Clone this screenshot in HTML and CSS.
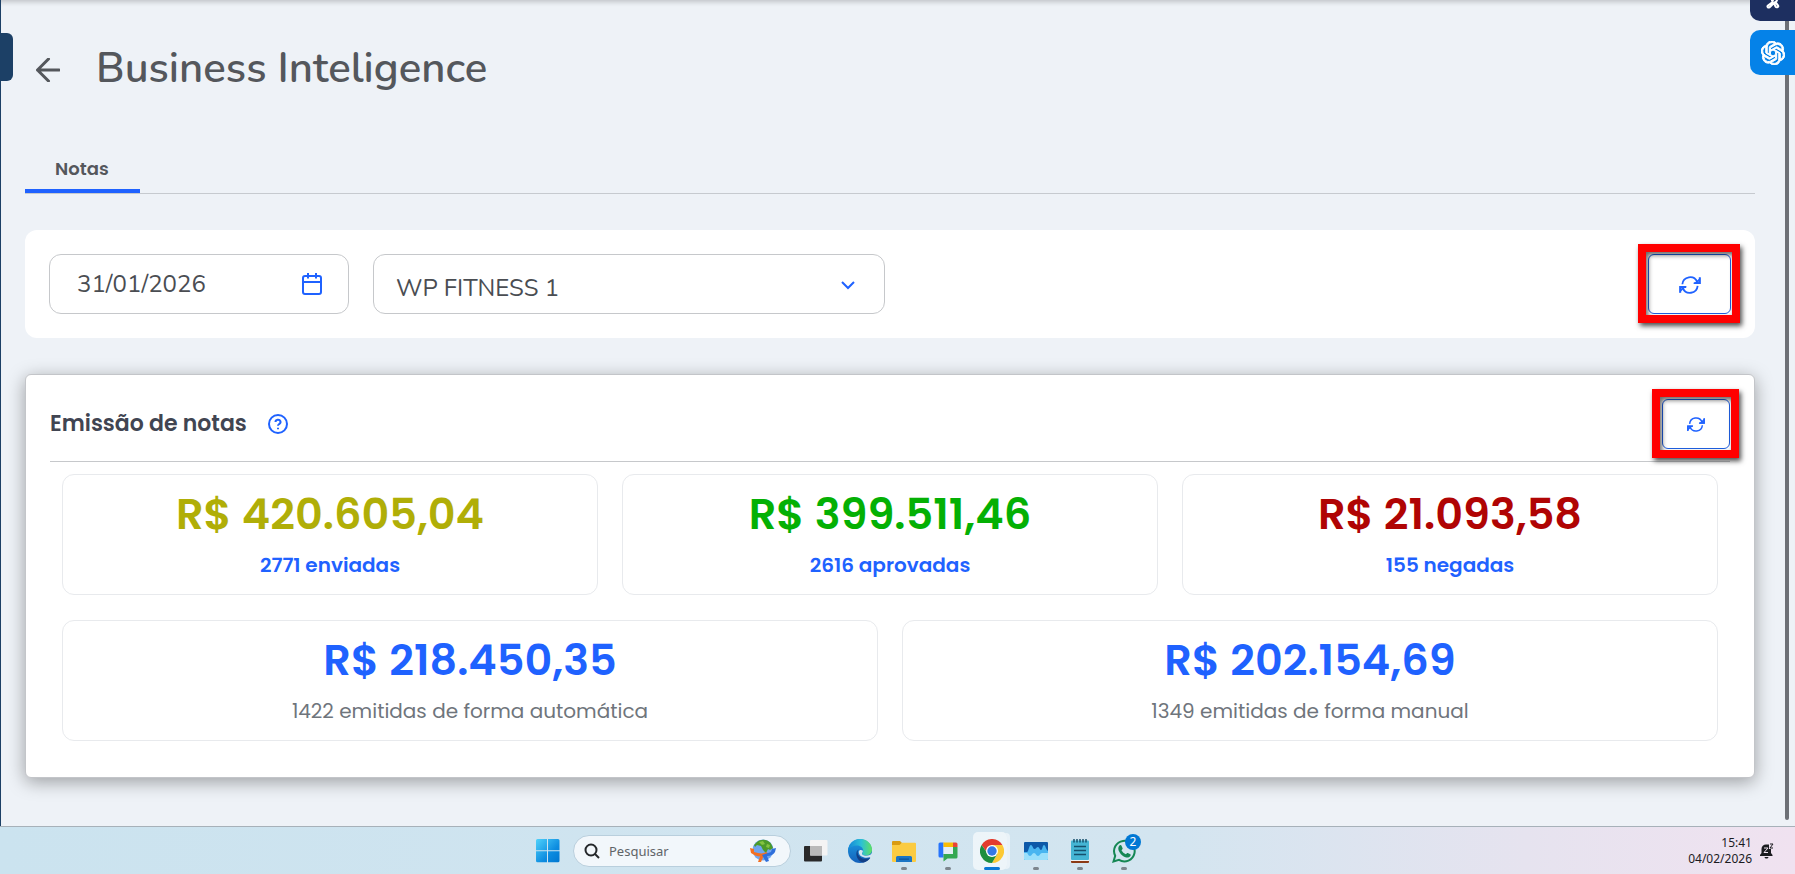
FILE: index.html
```html
<!DOCTYPE html>
<html lang="pt-BR">
  <head>
    <meta charset="UTF-8" />
    <meta name="viewport" content="width=device-width, initial-scale=1.0" />
    <title>Business Inteligence</title>
    <link rel="stylesheet" href="styles.css">
  </head>
  <body>
    <!-- Shared refresh icon -->
    <svg class="sprite" aria-hidden="true">
      <symbol id="refresh" viewBox="0 0 24 20">
        <path d="M3.5 9.2A8.6 8.6 0 0 1 20 6.6M20.5 11A8.6 8.6 0 0 1 4 13.4" />
        <path d="M22.8 1.5V8h-6.6M1.2 18.7v-6.5h6.6" />
        <path class="solid" d="M22.8 3.6V8h-4.6zM1.2 16.6v-4.4h4.6z" />
      </symbol>
    </svg>

    <!-- Application page -->
    <main class="page">
      <button class="menu-tab" aria-label="Menu"></button>

      <header class="page-header">
        <a class="back" href="#" aria-label="Voltar">
          <svg viewBox="0 0 24 24"><path d="M23 12H1.500M12.500 1 1.500 12l11 11" /></svg>
        </a>
        <h1>Business Inteligence</h1>
      </header>

      <nav class="tabs">
        <a class="tab active" href="#">Notas</a>
      </nav>

      <!-- Filters -->
      <section class="filters">
        <div class="field date-field">
          <input type="text" value="31/01/2026" aria-label="Data">
          <svg class="calendar" viewBox="0 0 20 22">
            <rect x="1" y="3" width="18" height="18" rx="2" />
            <path d="M1 9h18M6 0v5.500M14 0v5.500" />
          </svg>
        </div>
        <div class="field select-field">
          <select aria-label="Unidade">
            <option>WP FITNESS 1</option>
          </select>
          <svg class="chevron" viewBox="0 0 14 9"><path d="m1 1 6 6 6-6" /></svg>
        </div>
        <div class="highlight">
          <button class="refresh large" aria-label="Atualizar">
            <svg><use href="#refresh" /></svg>
          </button>
        </div>
      </section>

      <!-- Invoices summary -->
      <section class="card">
        <div class="card-header">
          <h2>Emissão de notas</h2>
          <button class="help" aria-label="Ajuda">
            <svg viewBox="0 0 20 20">
              <circle cx="10" cy="10" r="9" />
              <path d="M7.500 8a2.500 2.300 0 1 1 3.700 2c-.8.500-1.200.900-1.200 1.700M10 13.700v1.500" />
            </svg>
          </button>
          <div class="highlight">
            <button class="refresh" aria-label="Atualizar">
              <svg><use href="#refresh" /></svg>
            </button>
          </div>
        </div>

        <div class="totals">
          <div class="total sent">
            <strong>R$ 420.605,04</strong>
            <a href="#">2771 enviadas</a>
          </div>
          <div class="total approved">
            <strong>R$ 399.511,46</strong>
            <a href="#">2616 aprovadas</a>
          </div>
          <div class="total denied">
            <strong>R$ 21.093,58</strong>
            <a href="#">155 negadas</a>
          </div>
        </div>
        <div class="totals">
          <div class="total">
            <strong>R$ 218.450,35</strong>
            <span>1422 emitidas de forma automática</span>
          </div>
          <div class="total">
            <strong>R$ 202.154,69</strong>
            <span>1349 emitidas de forma manual</span>
          </div>
        </div>
      </section>

      <div class="scrollbar"></div>

      <!-- Floating side buttons -->
      <aside class="side-buttons">
        <button class="side-button navy" aria-label="Extensão">
          <svg viewBox="0 0 14 9">
            <path d="M5 0h2L6 2.500 2 5.500C.8 6.500 2 8 3.500 7.300L8 3l1.500 3.500c.8 1.500 3.300.8 2.700-.7L9.500 2l2-2" />
          </svg>
        </button>
        <button class="side-button blue" aria-label="Assistente">
          <svg viewBox="0 0 24 24">
            <path d="M22.2819 9.8211a5.9847 5.9847 0 0 0-.5157-4.9108 6.0462 6.0462 0 0 0-6.5098-2.9A6.0651 6.0651 0 0 0 4.9807 4.1818a5.9847 5.9847 0 0 0-3.9977 2.9 6.0462 6.0462 0 0 0 .7427 7.0966 5.98 5.98 0 0 0 .511 4.9107 6.051 6.051 0 0 0 6.5146 2.9001A5.9847 5.9847 0 0 0 13.2599 24a6.0557 6.0557 0 0 0 5.7718-4.2058 5.9894 5.9894 0 0 0 3.9977-2.9001 6.0557 6.0557 0 0 0-.7475-7.0729zm-9.022 12.6081a4.4755 4.4755 0 0 1-2.8764-1.0408l.1419-.0804 4.7783-2.7582a.7948.7948 0 0 0 .3927-.6813v-6.7369l2.02 1.1686a.071.071 0 0 1 .038.052v5.5826a4.504 4.504 0 0 1-4.4945 4.4944zm-9.6607-4.1254a4.4708 4.4708 0 0 1-.5346-3.0137l.142.0852 4.783 2.7582a.7712.7712 0 0 0 .7806 0l5.8428-3.3685v2.3324a.0804.0804 0 0 1-.0332.0615L9.74 19.9502a4.4992 4.4992 0 0 1-6.1408-1.6464zM2.3408 7.8956a4.485 4.485 0 0 1 2.3655-1.9728V11.6a.7664.7664 0 0 0 .3879.6765l5.8144 3.3543-2.0201 1.1685a.0757.0757 0 0 1-.071 0l-4.8303-2.7865A4.504 4.504 0 0 1 2.3408 7.872zm16.5963 3.8558L13.1038 8.364 15.1192 7.2a.0757.0757 0 0 1 .071 0l4.8303 2.7913a4.4944 4.4944 0 0 1-.6765 8.1042v-5.6772a.79.79 0 0 0-.407-.667zm2.0107-3.0231l-.142-.0852-4.7735-2.7818a.7759.7759 0 0 0-.7854 0L9.409 9.2297V6.8974a.0662.0662 0 0 1 .0284-.0615l4.8303-2.7866a4.4992 4.4992 0 0 1 6.6802 4.66zM8.3065 12.863l-2.02-1.1638a.0804.0804 0 0 1-.038-.0567V6.0742a4.4992 4.4992 0 0 1 7.3757-3.4537l-.142.0805L8.704 5.459a.7948.7948 0 0 0-.3927.6813zm1.0976-2.3654l2.602-1.4998 2.6069 1.4998v2.9994l-2.5974 1.4997-2.6067-1.4997Z" />
          </svg>
        </button>
      </aside>
    </main>

    <!-- Taskbar -->
    <footer class="taskbar">
      <div class="apps">
        <button class="app" aria-label="Iniciar">
          <svg viewBox="0 0 24 24">
            <defs>
              <linearGradient id="win" gradientUnits="userSpaceOnUse" x1="0" y1="0" x2="24" y2="24">
                <stop offset="0" stop-color="#4fd2fb" /><stop offset=".6" stop-color="#0d8ce0" /><stop offset="1" stop-color="#0075cf" />
              </linearGradient>
            </defs>
            <path fill="url(#win)" d="M1.500 0H11v11.300H0V1.500A1.500 1.500 0 0 1 1.500 0zM12 0h10a1.500 1.500 0 0 1 1.500 1.500v9.800H12zM0 12.300h11v11H1.500A1.500 1.500 0 0 1 0 21.800zM12 12.300h11.500v9.500a1.500 1.500 0 0 1-1.500 1.500H12z" />
          </svg>
        </button>

        <label class="search">
          <svg class="search-icon" viewBox="0 0 16 16"><circle cx="7" cy="7" r="5.500" /><path d="m11 11 4 4" /></svg>
          <input type="text" placeholder="Pesquisar" aria-label="Pesquisar">
          <svg class="globe" viewBox="0 0 26 24">
            <circle cx="13" cy="11" r="10.500" fill="#6fa5ee" />
            <path fill="#4c9a2a" d="M7 3c4-3.500 11-3 14 1.500l2 4.500-3 2-2-1-2 4-3-3-2-4-4-1-2 2-1-2z" />
            <path fill="#83c341" d="M9 3l4-1 2 3-3 1zM17 5l3 1-1 3-3-1z" />
            <path fill="#f36f21" d="M0 9l4 1v3c4 1 7 2 10 1l2-1 3 2-3 1c-5 3-11 1-15-2zM11 15l3 1-3 7H8z" />
            <path fill="#2f6fdb" d="M26 9l-4 1-1 3-6 2-3 1 4 7 3-1-2-5c4 0 7-2 8-4z" />
          </svg>
        </label>

        <button class="app" aria-label="Visão de tarefas">
          <svg viewBox="0 0 24 24">
            <rect x="0" y="7" width="18" height="15.500" rx="1" fill="#29292a" />
            <rect x="6" y="1" width="17.500" height="15.500" rx="1" fill="#f4f4f4" />
            <path fill="#b9b9b9" d="M6 7h12v9.500H6z" />
          </svg>
        </button>

        <button class="app" aria-label="Edge">
          <svg viewBox="0 0 24 24">
            <defs>
              <linearGradient id="edge-top" x1="0" y1="0" x2="1" y2="0">
                <stop offset="0" stop-color="#1486d8" /><stop offset=".55" stop-color="#2cc0d6" /><stop offset="1" stop-color="#5fe063" />
              </linearGradient>
              <linearGradient id="edge-wave" x1="0" y1="0" x2="0" y2="1">
                <stop offset="0" stop-color="#1b9de2" /><stop offset="1" stop-color="#1560ba" />
              </linearGradient>
            </defs>
            <circle cx="12" cy="12" r="12" fill="url(#edge-wave)" />
            <path fill="url(#edge-top)" d="M0 11C1 4.500 6 0 12 0c7 0 12 5 12 10.500 0 3.500-2.500 6-6 6-2.500 0-3.800-1-3.800-2 0-.6 1-1 1-3C15.200 9 12.500 6.500 9 6.500c-4 0-7 1.500-9 4.500z" />
            <path fill="#123f86" d="M8.500 13.500c-1 5 3 9.500 7 10 3-.8 5.500-2.500 7-4.800-5 2.300-12 1-12.800-4.700-.1-1.200.2-2.500 1-3.500-1 .5-2 1.600-2.200 3z" />
            <path fill="#d3e5f0" d="M10.700 13c.3 4.500 5.800 6.800 11 5.300.6-.2 1-.1.800.4L24 24V14c-1 1.700-3.300 2.700-6 2.700-2.600 0-4.200-1.200-4-2.500.3-.5 1-1.200.9-2.500-1.500-1.200-4-.9-4.200 1.300z" />
          </svg>
        </button>

        <button class="app open" aria-label="Explorador de Arquivos">
          <svg viewBox="0 0 24 24">
            <path fill="#d99b13" d="M1 2h7l2 2-2 3H0V3a1 1 0 0 1 1-1z" />
            <path fill="#fbcb42" d="M0 6h7.500L10 3.800h13a1 1 0 0 1 1 1V22a1 1 0 0 1-1 1H1a1 1 0 0 1-1-1z" />
            <path fill="#1b75c4" d="M4 23v-4.500A1.500 1.500 0 0 1 5.500 17h13a1.500 1.500 0 0 1 1.500 1.500V23z" />
            <path fill="#0d549c" d="M7 19.500h10v1.300H7z" />
          </svg>
        </button>

        <button class="app open" aria-label="Chat">
          <svg viewBox="0 0 24 24">
            <path fill="#2674fc" d="M4 3.500h3.500v15H4A1.500 1.500 0 0 1 2.500 17V5A1.500 1.500 0 0 1 4 3.500z" />
            <path fill="#fbbc04" d="M7.500 3.500H17V8H7.500z" />
            <path fill="#34a853" d="M17 8h4.500v10a1.500 1.500 0 0 1-1.500 1.500H11.500L7.500 22.500V15H17z" />
            <path fill="#ea4335" d="M17 3.500h3A1.500 1.500 0 0 1 21.500 5v3H17z" />
            <path fill="#e4eef5" d="M7.500 8H17v7H7.500z" />
          </svg>
        </button>

        <button class="app open active" aria-label="Chrome">
          <svg viewBox="0 0 24 24">
            <path fill="#e33b2e" d="M1.600 6A12 12 0 0 1 22.400 6H12L8 15z" />
            <path fill="#fcc934" d="M22.400 6A12 12 0 0 1 12 24l5.200-9L12 6z" />
            <path fill="#1e8e3e" d="M1.600 6A12 12 0 0 0 12 24l5.200-9H8z" />
            <circle cx="12" cy="12" r="6" fill="#fff" />
            <circle cx="12" cy="12" r="4.700" fill="#3578e5" />
          </svg>
        </button>

        <button class="app open" aria-label="Monitor">
          <svg viewBox="0 0 24 24">
            <rect x="0" y="3" width="24" height="18" rx="1" fill="#0d58a8" />
            <path fill="#49b5f0" d="M0 13h3c1.500 0 2-7 4-7 1.500 0 2 4 3.500 4S12.500 8 14 8s1.500 3 3 3 1.500-5 3-5 1.500 4 4 6v8a1 1 0 0 1-1 1H1a1 1 0 0 1-1-1z" />
            <path fill="#9adffb" d="M0 14h3c1 0 1 3 3 3s2-3 4-3 2 3 4 3 2-3 4-3h6v6a1 1 0 0 1-1 1H1a1 1 0 0 1-1-1z" />
          </svg>
        </button>

        <button class="app open" aria-label="Bloco de Notas">
          <svg viewBox="0 0 24 24">
            <path fill="#8b3a16" d="M3 21h18v2a1 1 0 0 1-1 1H4a1 1 0 0 1-1-1z" />
            <path fill="#f2f2f2" d="M3 20h18v2H3z" />
            <rect x="3" y="1.500" width="18" height="19.500" rx="1" fill="#45b5d4" />
            <path stroke="#16506c" stroke-width="1.500" d="M6 7.500h12M6 11.500h12M6 15.500h12M6 0v3.500M9 0v3.500M12 0v3.500M15 0v3.500M18 0v3.500" />
          </svg>
        </button>

        <button class="app open" aria-label="WhatsApp">
          <svg viewBox="0 0 24 24">
            <path fill="none" stroke="#158754" stroke-width="2" d="M1.500 22.500l1.700-5.700A10.300 10.300 0 1 1 7 20.900z" />
            <path fill="#158754" d="M7.500 6.500c.6-.6 1.500-.6 1.900.1l1.200 2.700c.2.500 0 .9-1.100 2 1 2 2.500 3.300 4.400 4 1-1.300 1.400-1.500 1.900-1.300l2.500 1.300c.5.300.5.900.2 1.500-.7 1.500-2.500 2-4.200 1.600C10 17.400 7 13.500 6.400 10.500c-.3-1.600.2-3 1.100-4z" />
          </svg>
          <span class="badge">2</span>
        </button>
      </div>

      <div class="tray">
        <div class="clock">
          <time>15:41</time>
          <time>04/02/2026</time>
        </div>
        <svg class="bell" viewBox="0 0 14 16">
          <path fill="#1b1b1f" d="M0 12l1.500-2V6A4.500 4.500 0 0 1 6 1.500h3V6h2v4l1.500 2v1H0zM4.500 14h4c-.4 2-3.600 2-4 0z" />
          <path class="z" d="M4 5h4L4 9.500h4" />
          <path class="z dark" d="M10 1h3l-3 4h3" />
        </svg>
      </div>
    </footer>
  </body>
</html>
```

FILE: styles.css
```css
/* Page layout and background */
* {
  box-sizing: border-box;
}

body {
  margin: 0;
  min-height: 100vh;
  display: flex;
  flex-direction: column;
  font-family: "Poppins", "Inter", sans-serif;
  background: #eef2f7;
  color: #54575c;
}

button {
  padding: 0;
  border: none;
  background: none;
  font: inherit;
  cursor: pointer;
}

a {
  color: inherit;
  text-decoration: none;
}

svg {
  display: block;
}

.sprite {
  display: none;
}

.page {
  position: relative;
  flex: 1;
  padding: 36px 40px 40px 24px;
  border-left: 1px solid #1c4066;
  box-shadow: inset 0 6px 5px -4px rgba(0, 0, 0, 0.2);
}

/* Collapsed side menu handle */
.menu-tab {
  position: absolute;
  top: 33px;
  left: 0;
  width: 12px;
  height: 48px;
  border-radius: 0 6px 6px 0;
  background: #1c4066;
}

/* Title */
.page-header {
  display: flex;
  align-items: center;
  gap: 36px;
  height: 68px;
  padding-left: 11px;
}

.back svg {
  width: 24px;
  height: 24px;
  fill: none;
  stroke: #54575c;
  stroke-width: 3;
  stroke-linecap: round;
  stroke-linejoin: round;
}

h1 {
  margin: 0;
  font-family: "Nunito", "Open Sans", sans-serif;
  font-size: 42px;
  line-height: 56px;
  padding-bottom: 2px;
  font-weight: 600;
}

/* Tabs */
.tabs {
  display: flex;
  margin-top: 42px;
  border-bottom: 1px solid #c6cacf;
}

.tab {
  padding: 11px 31px 8px 30px;
  border-bottom: 4px solid transparent;
  font-size: 18px;
  line-height: 24px;
  font-weight: 600;
}

.tab.active {
  border-color: #1f62ff;
  border-radius: 4px 4px 0 0;
}

/* Filters */
.filters {
  display: flex;
  gap: 24px;
  margin-top: 36px;
  padding: 24px;
  border-radius: 12px;
  background: #fff;
}

.field {
  position: relative;
  height: 60px;
}

.date-field {
  width: 300px;
}

.select-field {
  width: 512px;
}

.field input,
.field select {
  width: 100%;
  height: 100%;
  padding: 0 27px;
  border: 1px solid #c6c8cb;
  border-radius: 12px;
  background: #fff;
  font-family: "Nunito", "Open Sans", sans-serif;
  font-size: 24px;
  color: #4a4d52;
  appearance: none;
}

.field select {
  padding: 8px 22px 0;
}

.field svg {
  position: absolute;
  fill: none;
  stroke: #1f62ff;
  stroke-width: 2;
  pointer-events: none;
}

.calendar {
  top: 19px;
  right: 27px;
  width: 20px;
  height: 22px;
}

.chevron {
  top: 27px;
  right: 30px;
  width: 14px;
  height: 9px;
}

/* Refresh buttons with the red frame over them */
.highlight {
  position: relative;
  margin-left: auto;
}

.highlight::after {
  content: "";
  position: absolute;
  inset: -10px -9px -9px -10px;
  border: 8px solid #f00;
  box-shadow: 2px 3px 5px rgba(0, 0, 0, 0.7), inset 2px 3px 5px rgba(0, 0, 0, 0.6);
  pointer-events: none;
}

.refresh {
  display: flex;
  align-items: center;
  justify-content: center;
  width: 68px;
  height: 50px;
  border: 1px solid #1f5fe0;
  border-radius: 6px;
  background: #fff;
}

.refresh svg {
  width: 18px;
  height: 15px;
  fill: none;
  stroke: #1f62ff;
  stroke-width: 2;
}

.refresh .solid {
  fill: #1f62ff;
}

.refresh.large {
  width: 83px;
  height: 60px;
  padding-top: 2px;
}

.refresh.large svg {
  width: 22px;
  height: 18px;
}

/* Summary card */
.card {
  margin-top: 36px;
  padding: 24px 24px 36px;
  border: 1px solid #c3c5c9;
  border-radius: 6px;
  background: #fff;
  box-shadow: 0 4px 18px rgba(0, 0, 0, 0.35);
}

.card-header {
  display: flex;
  align-items: center;
  padding-bottom: 12px;
  border-bottom: 1px solid #c6c8cb;
}

h2 {
  margin: 0 21px 0 0;
  font-size: 22px;
  line-height: 30px;
  font-weight: 600;
  color: #414552;
}

.help svg {
  width: 20px;
  height: 20px;
  fill: none;
  stroke: #1f62ff;
  stroke-width: 2;
}

.totals {
  display: flex;
  gap: 24px;
  margin: 12px 12px 0;
}

.totals + .totals {
  margin-top: 25px;
}

.total {
  flex: 1;
  display: flex;
  flex-direction: column;
  align-items: center;
  gap: 7px;
  padding: 11px 0 14px;
  border: 1px solid #e8eaed;
  border-radius: 12px;
  font-size: 20px;
  line-height: 30px;
  color: #6f757c;
}

.total strong {
  font-size: 43px;
  line-height: 57px;
  font-weight: 600;
  color: #1f62ff;
}

.total a {
  font-weight: 600;
  color: #1f62ff;
}

.sent strong {
  color: #b0ae07;
}

.approved strong {
  color: #04b004;
}

.denied strong {
  color: #b00404;
}

/* Page scrollbar */
.scrollbar {
  position: absolute;
  top: 0;
  right: 6px;
  bottom: 6px;
  width: 4px;
  border-radius: 0 0 2px 2px;
  background: #6d7076;
}

/* Floating side buttons */
.side-buttons {
  position: absolute;
  top: 0;
  right: 0;
  display: flex;
  flex-direction: column;
  gap: 9px;
}

.side-button {
  display: flex;
  align-items: center;
  justify-content: center;
  width: 45px;
  height: 45px;
  border-radius: 10px 0 0 10px;
}

.side-button.navy {
  align-items: flex-start;
  height: 21px;
  border-top-left-radius: 0;
  background: #1d2f60;
}

.side-button.navy svg {
  width: 14px;
  height: 9px;
  fill: none;
  stroke: #fff;
  stroke-width: 2;
}

.side-button.blue {
  background: #0582e8;
}

.side-button.blue svg {
  width: 24px;
  height: 24px;
  fill: #fff;
  stroke: #fff;
  stroke-width: 1;
}

/* Taskbar */
.taskbar {
  display: flex;
  flex-shrink: 0;
  height: 48px;
  border-top: 1px solid #a7b1b9;
  background: linear-gradient(to right, #cbe3ef, #d3e5f0 65%, #e6e3ef 85%, #f0e2f0);
  font-family: "Segoe UI", "Noto Sans", sans-serif;
}

.apps {
  display: flex;
  align-items: center;
  margin: 0 auto;
}

.app {
  position: relative;
  display: flex;
  align-items: center;
  justify-content: center;
  width: 44px;
  height: 46px;
}

.app svg {
  position: relative;
  width: 24px;
  height: 24px;
}

.app.open::after {
  content: "";
  position: absolute;
  bottom: 4px;
  width: 6px;
  height: 3px;
  border-radius: 2px;
  background: #7d868e;
}

.app.active::before {
  content: "";
  position: absolute;
  top: 4px;
  left: 3px;
  width: 34px;
  height: 38px;
  border-radius: 5px;
  background: rgba(255, 255, 255, 0.6);
  box-shadow: 4px 0 0 -1px rgba(255, 255, 255, 0.5);
}

.app.active::after {
  width: 16px;
  background: #0a78d4;
}

.badge {
  position: absolute;
  top: 6px;
  right: 5px;
  width: 16px;
  height: 16px;
  border-radius: 50%;
  background: #0078d4;
  color: #fff;
  font-size: 12px;
  line-height: 16px;
}

.search {
  display: flex;
  align-items: center;
  width: 218px;
  height: 32px;
  margin: 0 3px;
  padding: 0 14px 0 10px;
  border: 1px solid #b9cfdd;
  border-radius: 16px;
  background: #f2f7fb;
}

.search input {
  flex: 1;
  min-width: 0;
  padding: 0 9px;
  border: none;
  background: none;
  font: inherit;
  font-size: 13px;
}

.search input::placeholder {
  color: #5f6468;
}

.search-icon {
  width: 16px;
  height: 16px;
  fill: none;
  stroke: #24272a;
  stroke-width: 2;
}

.globe {
  width: 26px;
  height: 24px;
}

/* Clock and notifications */
.tray {
  display: flex;
  align-items: center;
  justify-content: flex-end;
  gap: 8px;
  width: 123px;
  padding-right: 21px;
}

.clock {
  display: flex;
  flex-direction: column;
  align-items: flex-end;
  font-size: 12px;
  line-height: 16px;
  color: #1b1b1f;
}

.bell {
  width: 14px;
  height: 16px;
}

.z {
  fill: none;
  stroke: #efe2ef;
}

.z.dark {
  stroke: #1b1b1f;
}
```
